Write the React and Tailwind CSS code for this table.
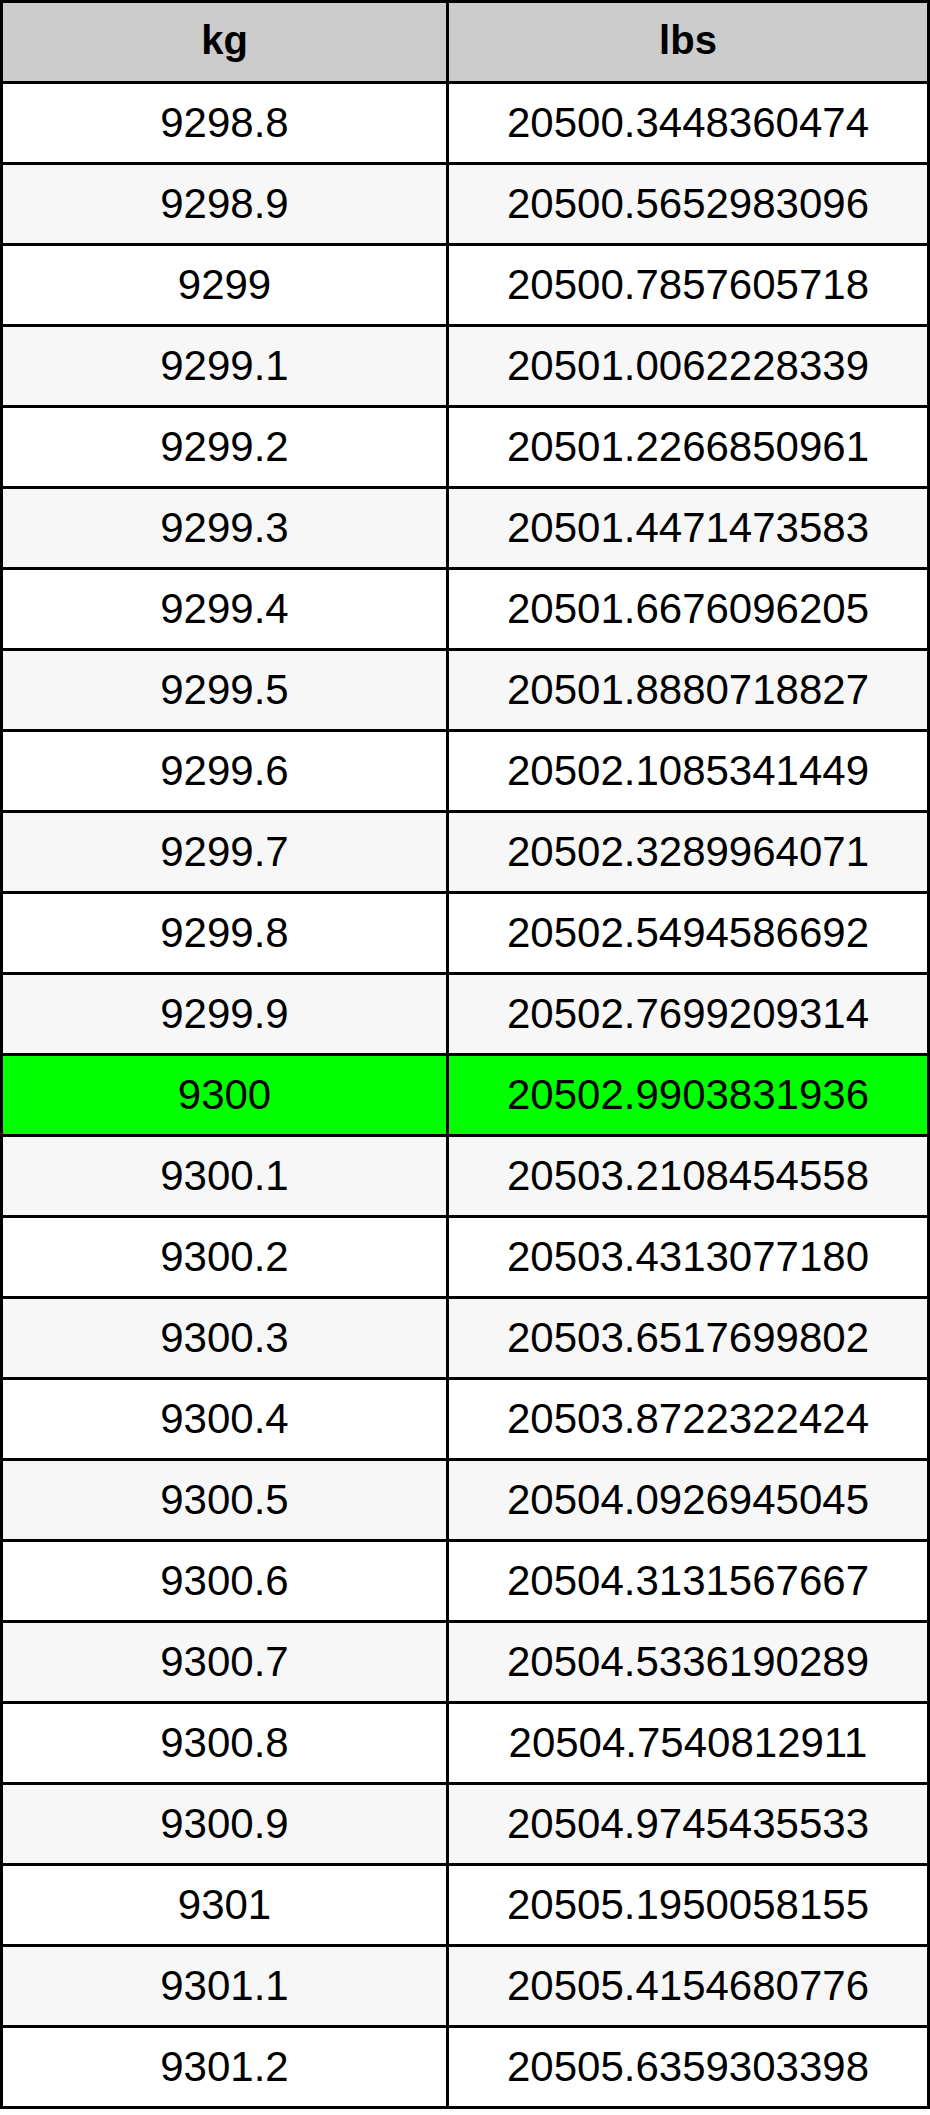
const rows = [
  ["9298.8", "20500.3448360474"],
  ["9298.9", "20500.5652983096"],
  ["9299", "20500.7857605718"],
  ["9299.1", "20501.0062228339"],
  ["9299.2", "20501.2266850961"],
  ["9299.3", "20501.4471473583"],
  ["9299.4", "20501.6676096205"],
  ["9299.5", "20501.8880718827"],
  ["9299.6", "20502.1085341449"],
  ["9299.7", "20502.3289964071"],
  ["9299.8", "20502.5494586692"],
  ["9299.9", "20502.7699209314"],
  ["9300", "20502.9903831936"],
  ["9300.1", "20503.2108454558"],
  ["9300.2", "20503.4313077180"],
  ["9300.3", "20503.6517699802"],
  ["9300.4", "20503.8722322424"],
  ["9300.5", "20504.0926945045"],
  ["9300.6", "20504.3131567667"],
  ["9300.7", "20504.5336190289"],
  ["9300.8", "20504.7540812911"],
  ["9300.9", "20504.9745435533"],
  ["9301", "20505.1950058155"],
  ["9301.1", "20505.4154680776"],
  ["9301.2", "20505.6359303398"],
];

export default function App() {
  return (
    <div className="bg-white w-[930px] h-[2115px]" style={{ fontFamily: '"Liberation Sans", Arial, sans-serif' }}>
      <div className="w-[930px] border-t-[3px] border-x-[3px] border-black text-black">
        <div className="flex h-[81px] border-b-[3px] border-black bg-[#cccccc] text-[40px] font-bold">
          <div className="w-[446px] border-r-[3px] border-black flex items-center justify-center pb-[4px]">kg</div>
          <div className="flex-1 flex items-center justify-center pb-[4px]">lbs</div>
        </div>
        {rows.map(([kg, lbs], i) => {
          const bg = kg === "9300" ? "bg-[#00ff00]" : i % 2 === 0 ? "bg-white" : "bg-[#f7f7f7]";
          return (
            <div key={kg} className={`flex h-[81px] border-b-[3px] border-black text-[42px] ${bg}`}>
              <div className="w-[446px] border-r-[3px] border-black flex items-center justify-center pb-[2px]">{kg}</div>
              <div className="flex-1 flex items-center justify-center pb-[2px]">{lbs}</div>
            </div>
          );
        })}
      </div>
    </div>
  );
}
